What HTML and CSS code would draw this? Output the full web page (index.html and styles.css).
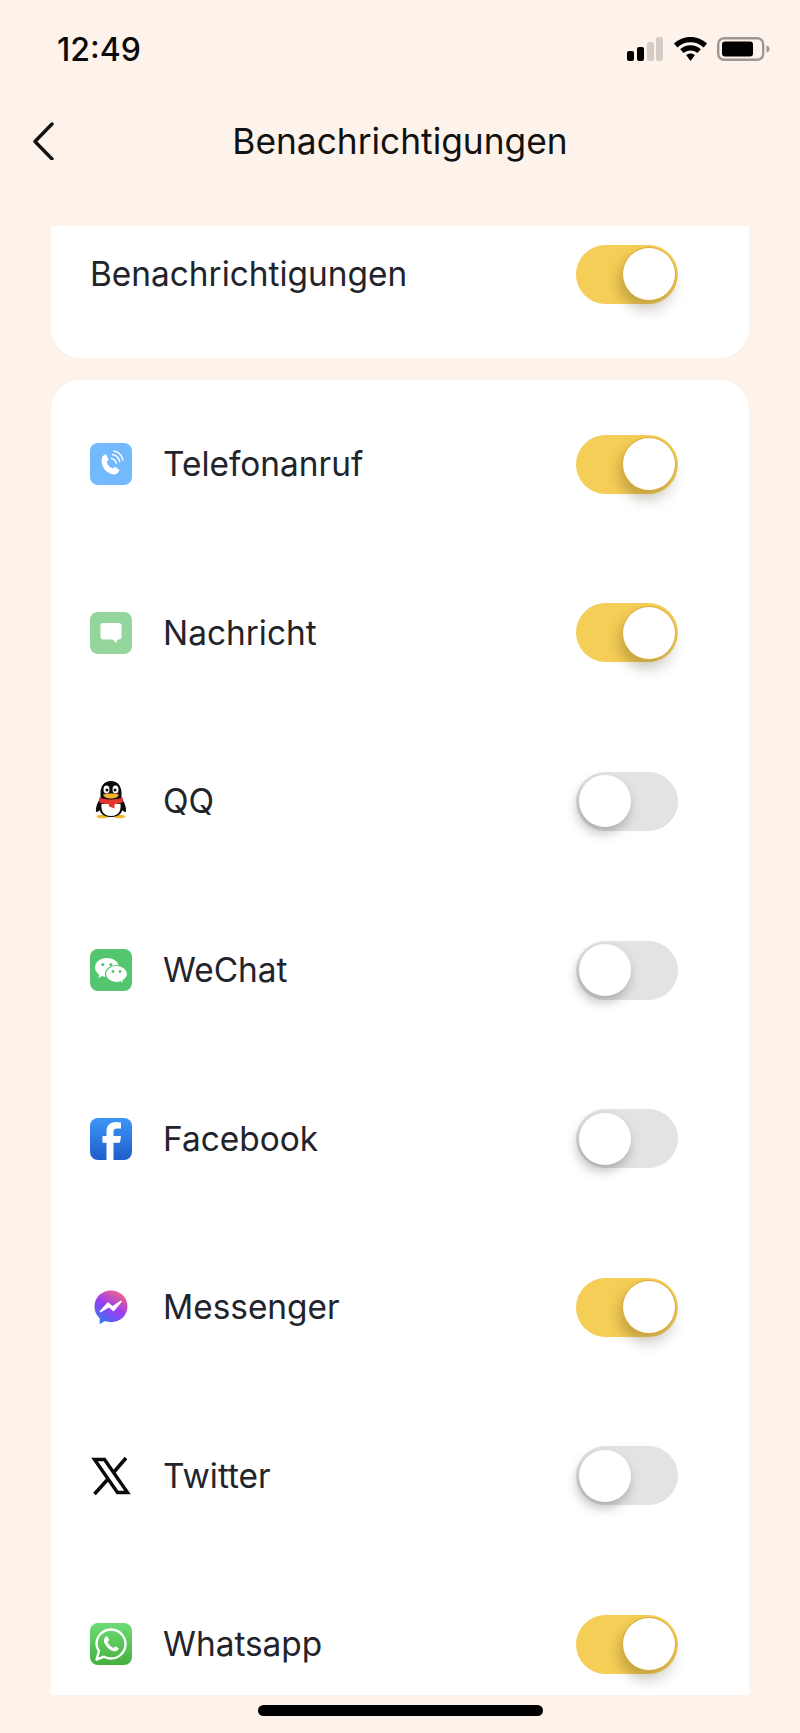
FILE: index.html
```html
<!DOCTYPE html>
<html>
<head>
    <meta charset="UTF-8">
    <title>Benachrichtigungen</title>
    <link rel="stylesheet" href="styles.css">
</head>
<body>
    <div class="status-bar">
        <div class="time">12:49</div>
        <div class="status-icons">
            <svg class="signal" width="36" height="24" viewBox="0 0 36 24">
                <rect x="0" y="14" width="7" height="10" rx="2" fill="#000"/>
                <rect x="10" y="10" width="7" height="14" rx="2" fill="#000"/>
                <rect x="20" y="5" width="7" height="19" rx="2" fill="#d3cdc6"/>
                <rect x="29" y="0" width="7" height="24" rx="2" fill="#d3cdc6"/>
            </svg>
            <svg class="wifi" width="33" height="24" viewBox="0 0 33 24">
                <path d="M16.5 0C10 0 4.600 2.400 0 6.600L3.400 10.400C7 7 11.500 5.200 16.500 5.200S26 7 29.600 10.400L33 6.600C28.400 2.400 23 0 16.500 0Z" fill="#000"/>
                <path d="M16.500 8.300C12.500 8.300 9 9.800 6.200 12.300L9.600 16C11.500 14.400 13.800 13.500 16.500 13.500S21.500 14.400 23.400 16L26.800 12.300C24 9.800 20.500 8.300 16.500 8.300Z" fill="#000"/>
                <path d="M16.500 16.500C14.800 16.500 13.300 17.100 12.100 18.100L16.500 24L20.900 18.100C19.700 17.100 18.200 16.500 16.500 16.500Z" fill="#000"/>
            </svg>
            <svg class="battery" width="53" height="24" viewBox="0 0 53 24">
                <rect x="1.200" y="1.200" width="45" height="21.600" rx="6" fill="none" stroke="#9d9791" stroke-width="2.400"/>
                <rect x="5" y="4.500" width="31" height="15" rx="3" fill="#000"/>
                <path d="M49.500 8.500C51.500 9 52.500 10.300 52.500 12S51.500 15 49.500 15.500Z" fill="#9d9791"/>
            </svg>
        </div>
    </div>

    <div class="nav-bar">
        <div class="back">
            <svg width="24" height="38" viewBox="0 0 24 38">
                <path d="M21 2L4 19.500L21 37" fill="none" stroke="#111" stroke-width="3.400" stroke-linecap="round" stroke-linejoin="round"/>
            </svg>
        </div>
        <div class="nav-title">Benachrichtigungen</div>
    </div>

    <div class="card card-master">
        <div class="row row-master">
            <div class="label">Benachrichtigungen</div>
            <div class="toggle on"><div class="knob"></div></div>
        </div>
    </div>

    <div class="card card-apps">
        <div class="row">
            <svg class="app-icon" viewBox="0 0 42 42">
                <rect x="0" y="0" width="42" height="42" rx="8" fill="#72b9fd"/>
                <path d="M12 14.500C13 12.500 14.500 11.500 16 11.200L18.500 16.200C18.500 17 17.300 18 16.800 18.800C17 21.500 19.800 24.700 22.800 25.600C23.600 25 24.500 23.900 25.300 24L29.500 27C29 28.600 27.500 31 25 31.500C20 32 15 28 12.800 23.500C11.500 20.500 11.300 17 12 14.500Z" fill="#fff"/>
                <path d="M21.500 15.500C24 16 25.700 17.800 26.200 20.200M22.500 11.500C26 12.200 29 15 29.800 18.700M24 8C28.500 9 32 12.500 33 17" fill="none" stroke="#fff" stroke-width="1.400" stroke-linecap="round"/>
            </svg>
            <div class="label">Telefonanruf</div>
            <div class="toggle on"><div class="knob"></div></div>
        </div>
        <div class="row">
            <svg class="app-icon" viewBox="0 0 42 42">
                <rect x="0" y="0" width="42" height="42" rx="8" fill="#93d59a"/>
                <path d="M13 11H29C30.500 11 31.500 12 31.500 13.500V25C31.500 26.500 30.500 27.500 29 27.500H27.500L26.500 31L22.500 27.500H13C11.500 27.500 10.500 26.500 10.500 25V13.500C10.500 12 11.500 11 13 11Z" fill="#fff"/>
            </svg>
            <div class="label">Nachricht</div>
            <div class="toggle on"><div class="knob"></div></div>
        </div>
        <div class="row">
            <svg class="app-icon" viewBox="0 0 42 42">
                <ellipse cx="12.500" cy="36.500" rx="6" ry="1.800" fill="#f2b632"/>
                <ellipse cx="29.500" cy="36.500" rx="6" ry="1.800" fill="#f2b632"/>
                <path d="M21 1C14 1 10.500 6.500 10.500 13V18C8 22 5.500 26 6 32C8 32 9 31 9.500 30C11 34.500 15 37 21 37S31 34.500 32.500 30C33 31 34 32 36 32C36.500 26 34 22 31.500 18V13C31.500 6.500 28 1 21 1Z" fill="#0c0c0e"/>
                <path d="M11.500 24C11 29 12 36 21 36S31 29 30.500 24Z" fill="#fff"/>
                <ellipse cx="16.500" cy="9.500" rx="3" ry="4" fill="#fff"/>
                <ellipse cx="25.500" cy="9.500" rx="3" ry="4" fill="#fff"/>
                <circle cx="17" cy="10" r="1.500" fill="#0c0c0e"/>
                <circle cx="25" cy="10" r="1.500" fill="#0c0c0e"/>
                <path d="M13 14.500C17 13 25 13 29 14.500C28 17.500 24.500 18.500 21 18.500S14 17.500 13 14.500Z" fill="#f4b42e"/>
                <path d="M9 17.500C15 20 27 20 33 17.500L32.500 22.500C30 23.500 27 24 24.500 24.200V28.500L19 26.500V24.200C15.500 24 11.500 23.500 9.500 22.500Z" fill="#e5362c"/>
            </svg>
            <div class="label">QQ</div>
            <div class="toggle"><div class="knob"></div></div>
        </div>
        <div class="row">
            <svg class="app-icon" viewBox="0 0 42 42">
                <rect x="0" y="0" width="42" height="42" rx="8" fill="#55c670"/>
                <path d="M17 9C10.500 9 5 13 5 18.500C5 21.500 6.800 24 9.300 25.800L8.300 29L12.200 27C13.800 27.500 15.500 27.900 17.300 27.900C24 27.900 29 23.700 29 18.500C29 13 23.500 9 17 9Z" fill="#fff"/>
                <circle cx="12.800" cy="15.500" r="1.600" fill="#55c670"/>
                <circle cx="20.800" cy="15.500" r="1.600" fill="#55c670"/>
                <path d="M26.500 16.500C20.500 16.500 15.500 20.300 15.500 25C15.500 29.700 20.500 33.500 26.500 33.500C28 33.500 29.300 33.200 30.500 32.800L33.800 34.500L33 31.500C35.500 30 37.500 27.700 37.500 25C37.500 20.300 32.500 16.500 26.500 16.500Z" fill="#fff" stroke="#55c670" stroke-width="1.200"/>
                <circle cx="23" cy="22.500" r="1.400" fill="#55c670"/>
                <circle cx="30" cy="22.500" r="1.400" fill="#55c670"/>
            </svg>
            <div class="label">WeChat</div>
            <div class="toggle"><div class="knob"></div></div>
        </div>
        <div class="row">
            <svg class="app-icon" viewBox="0 0 42 42">
                <defs>
                    <linearGradient id="fbBlue" x1="0" y1="0" x2="0" y2="1">
                        <stop offset="0" stop-color="#3c96f6"/>
                        <stop offset="1" stop-color="#1f5ecb"/>
                    </linearGradient>
                </defs>
                <rect x="0" y="0" width="42" height="42" rx="8" fill="url(#fbBlue)"/>
                <path d="M23.500 42V24.800H30L31 18H23.500V14C23.500 11.500 24.800 10.500 27 10.500H31V4.500C29.500 4.200 27.500 4 26 4C20 4 16.500 7.500 16.500 13.300V18H12.500V24.800H16.500V42Z" fill="#fff"/>
            </svg>
            <div class="label">Facebook</div>
            <div class="toggle"><div class="knob"></div></div>
        </div>
        <div class="row">
            <svg class="app-icon" viewBox="0 0 42 42">
                <defs>
                    <linearGradient id="msgGrad" x1="0.200" y1="1" x2="0.800" y2="0">
                        <stop offset="0" stop-color="#2f7bf6"/>
                        <stop offset="0.500" stop-color="#9b3cf0"/>
                        <stop offset="1" stop-color="#f56a7e"/>
                    </linearGradient>
                </defs>
                <path d="M21 4.500C11.700 4.500 4.500 11.300 4.500 20.500C4.500 25.300 6.500 29.500 9.700 32.300V38L15 35.100C16.800 35.700 18.900 36.200 21 36.200C30.300 36.200 37.500 29.500 37.500 20.300C37.500 11.300 30.300 4.500 21 4.500Z" fill="url(#msgGrad)"/>
                <path d="M10.500 25.500L18 17L22.500 21L31 15.500L23.500 24.500L19 20.500Z" fill="#fff" stroke="#fff" stroke-width="1.600" stroke-linejoin="round"/>
            </svg>
            <div class="label">Messenger</div>
            <div class="toggle on"><div class="knob"></div></div>
        </div>
        <div class="row">
            <svg class="app-icon" viewBox="0 0 42 42">
                <path d="M4.500 4.500H14.500L37.500 37.500H27.500Z" fill="none" stroke="#0a0a0a" stroke-width="3.400"/>
                <path d="M36 3L23.500 17.500M18.500 23.500L4.500 39" fill="none" stroke="#0a0a0a" stroke-width="3.600"/>
            </svg>
            <div class="label">Twitter</div>
            <div class="toggle"><div class="knob"></div></div>
        </div>
        <div class="row">
            <svg class="app-icon" viewBox="0 0 42 42">
                <defs>
                    <linearGradient id="waGreen" x1="0" y1="0" x2="0" y2="1">
                        <stop offset="0" stop-color="#6ddc76"/>
                        <stop offset="1" stop-color="#46b03f"/>
                    </linearGradient>
                </defs>
                <rect x="0" y="0" width="42" height="42" rx="8" fill="url(#waGreen)"/>
                <path d="M6.500 36.500L9 28C7.500 25.800 6.500 23.500 6.500 21C6.500 13 13 6.500 21 6.500S35.500 13 35.500 21S29 35.500 21 35.500C18.500 35.500 16 34.700 14.200 33.700Z" fill="none" stroke="#fff" stroke-width="2.400" stroke-linejoin="round"/>
                <path d="M16.500 13.500C15 14 13.500 15.800 14 18.500C15 23 19.500 27.500 24 28.300C26.800 28.800 28.500 27 28.800 25.300L25.300 23.300L23.500 25C21 24 18.500 21.500 17.500 19L19.200 17.200L17.500 13.500Z" fill="#fff"/>
            </svg>
            <div class="label">Whatsapp</div>
            <div class="toggle on"><div class="knob"></div></div>
        </div>
    </div>

    <div class="home-indicator"></div>
</body>
</html>
```

FILE: styles.css
```css
:root {
    --background-color: #fdf3ea;
    --text-color: #22242b;
    --toggle-on: #f5ce58;
    --toggle-off: #e3e3e3;
}

* {
    box-sizing: border-box;
    margin: 0;
    padding: 0;
}

html, body {
    height: 100%;
}

body {
    display: flex;
    flex-direction: column;
    height: 1733px;
    overflow: hidden;
    background-color: var(--background-color);
    color: var(--text-color);
    font-family: Inter, 'Noto Sans', sans-serif;
}

.status-bar {
    height: 98px;
    padding: 0 30px 0 57px;
    display: flex;
    align-items: center;
    justify-content: space-between;
    flex-shrink: 0;
}

.time {
    font-size: 32px;
    font-weight: 500;
    color: #0b0b0b;
}

.status-icons {
    display: flex;
    align-items: center;
    gap: 11px;
}

.wifi {
    margin-right: -1px;
}

.nav-bar {
    height: 86px;
    display: flex;
    align-items: center;
    justify-content: center;
    position: relative;
    flex-shrink: 0;
}

.back {
    position: absolute;
    left: 31px;
    top: 24px;
}

.nav-title {
    font-size: 35.300px;
    font-weight: 400;
    color: #111;
}

.card {
    margin: 0 51px;
    background: white;
    flex-shrink: 0;
}

.card-master {
    margin-top: 42px;
    height: 132px;
    border-radius: 0 0 30px 30px;
}

.card-apps {
    margin-top: 22px;
    height: 1315px;
    border-radius: 30px 30px 0 0;
    overflow: hidden;
}

.row {
    height: 168.600px;
    padding: 0 71px 0 39px;
    display: flex;
    align-items: center;
}

.row-master {
    height: 96px;
}

.app-icon {
    width: 42px;
    height: 42px;
    margin-right: 31px;
    flex-shrink: 0;
}

.label {
    flex: 1;
    font-size: 33.400px;
    font-weight: 400;
}

.toggle {
    width: 102px;
    height: 59px;
    padding: 4px 3px;
    border-radius: 30px;
    background: var(--toggle-off);
    display: flex;
    justify-content: flex-start;
    align-items: center;
    flex-shrink: 0;
}

.toggle.on {
    background: var(--toggle-on);
    justify-content: flex-end;
}

.knob {
    width: 52px;
    height: 52px;
    border-radius: 50%;
    background: white;
    box-shadow: -2px 6px 12px rgba(0,0,0,0.26);
}

.toggle.on .knob {
    box-shadow: 0 0 0 1px #d9ad3f, -6px 6px 12px rgba(120,90,20,0.22), 0 12px 14px rgba(0,0,0,0.12);
}

.home-indicator {
    position: absolute;
    left: 258px;
    top: 1705px;
    width: 285px;
    height: 11px;
    border-radius: 6px;
    background: black;
}
```
